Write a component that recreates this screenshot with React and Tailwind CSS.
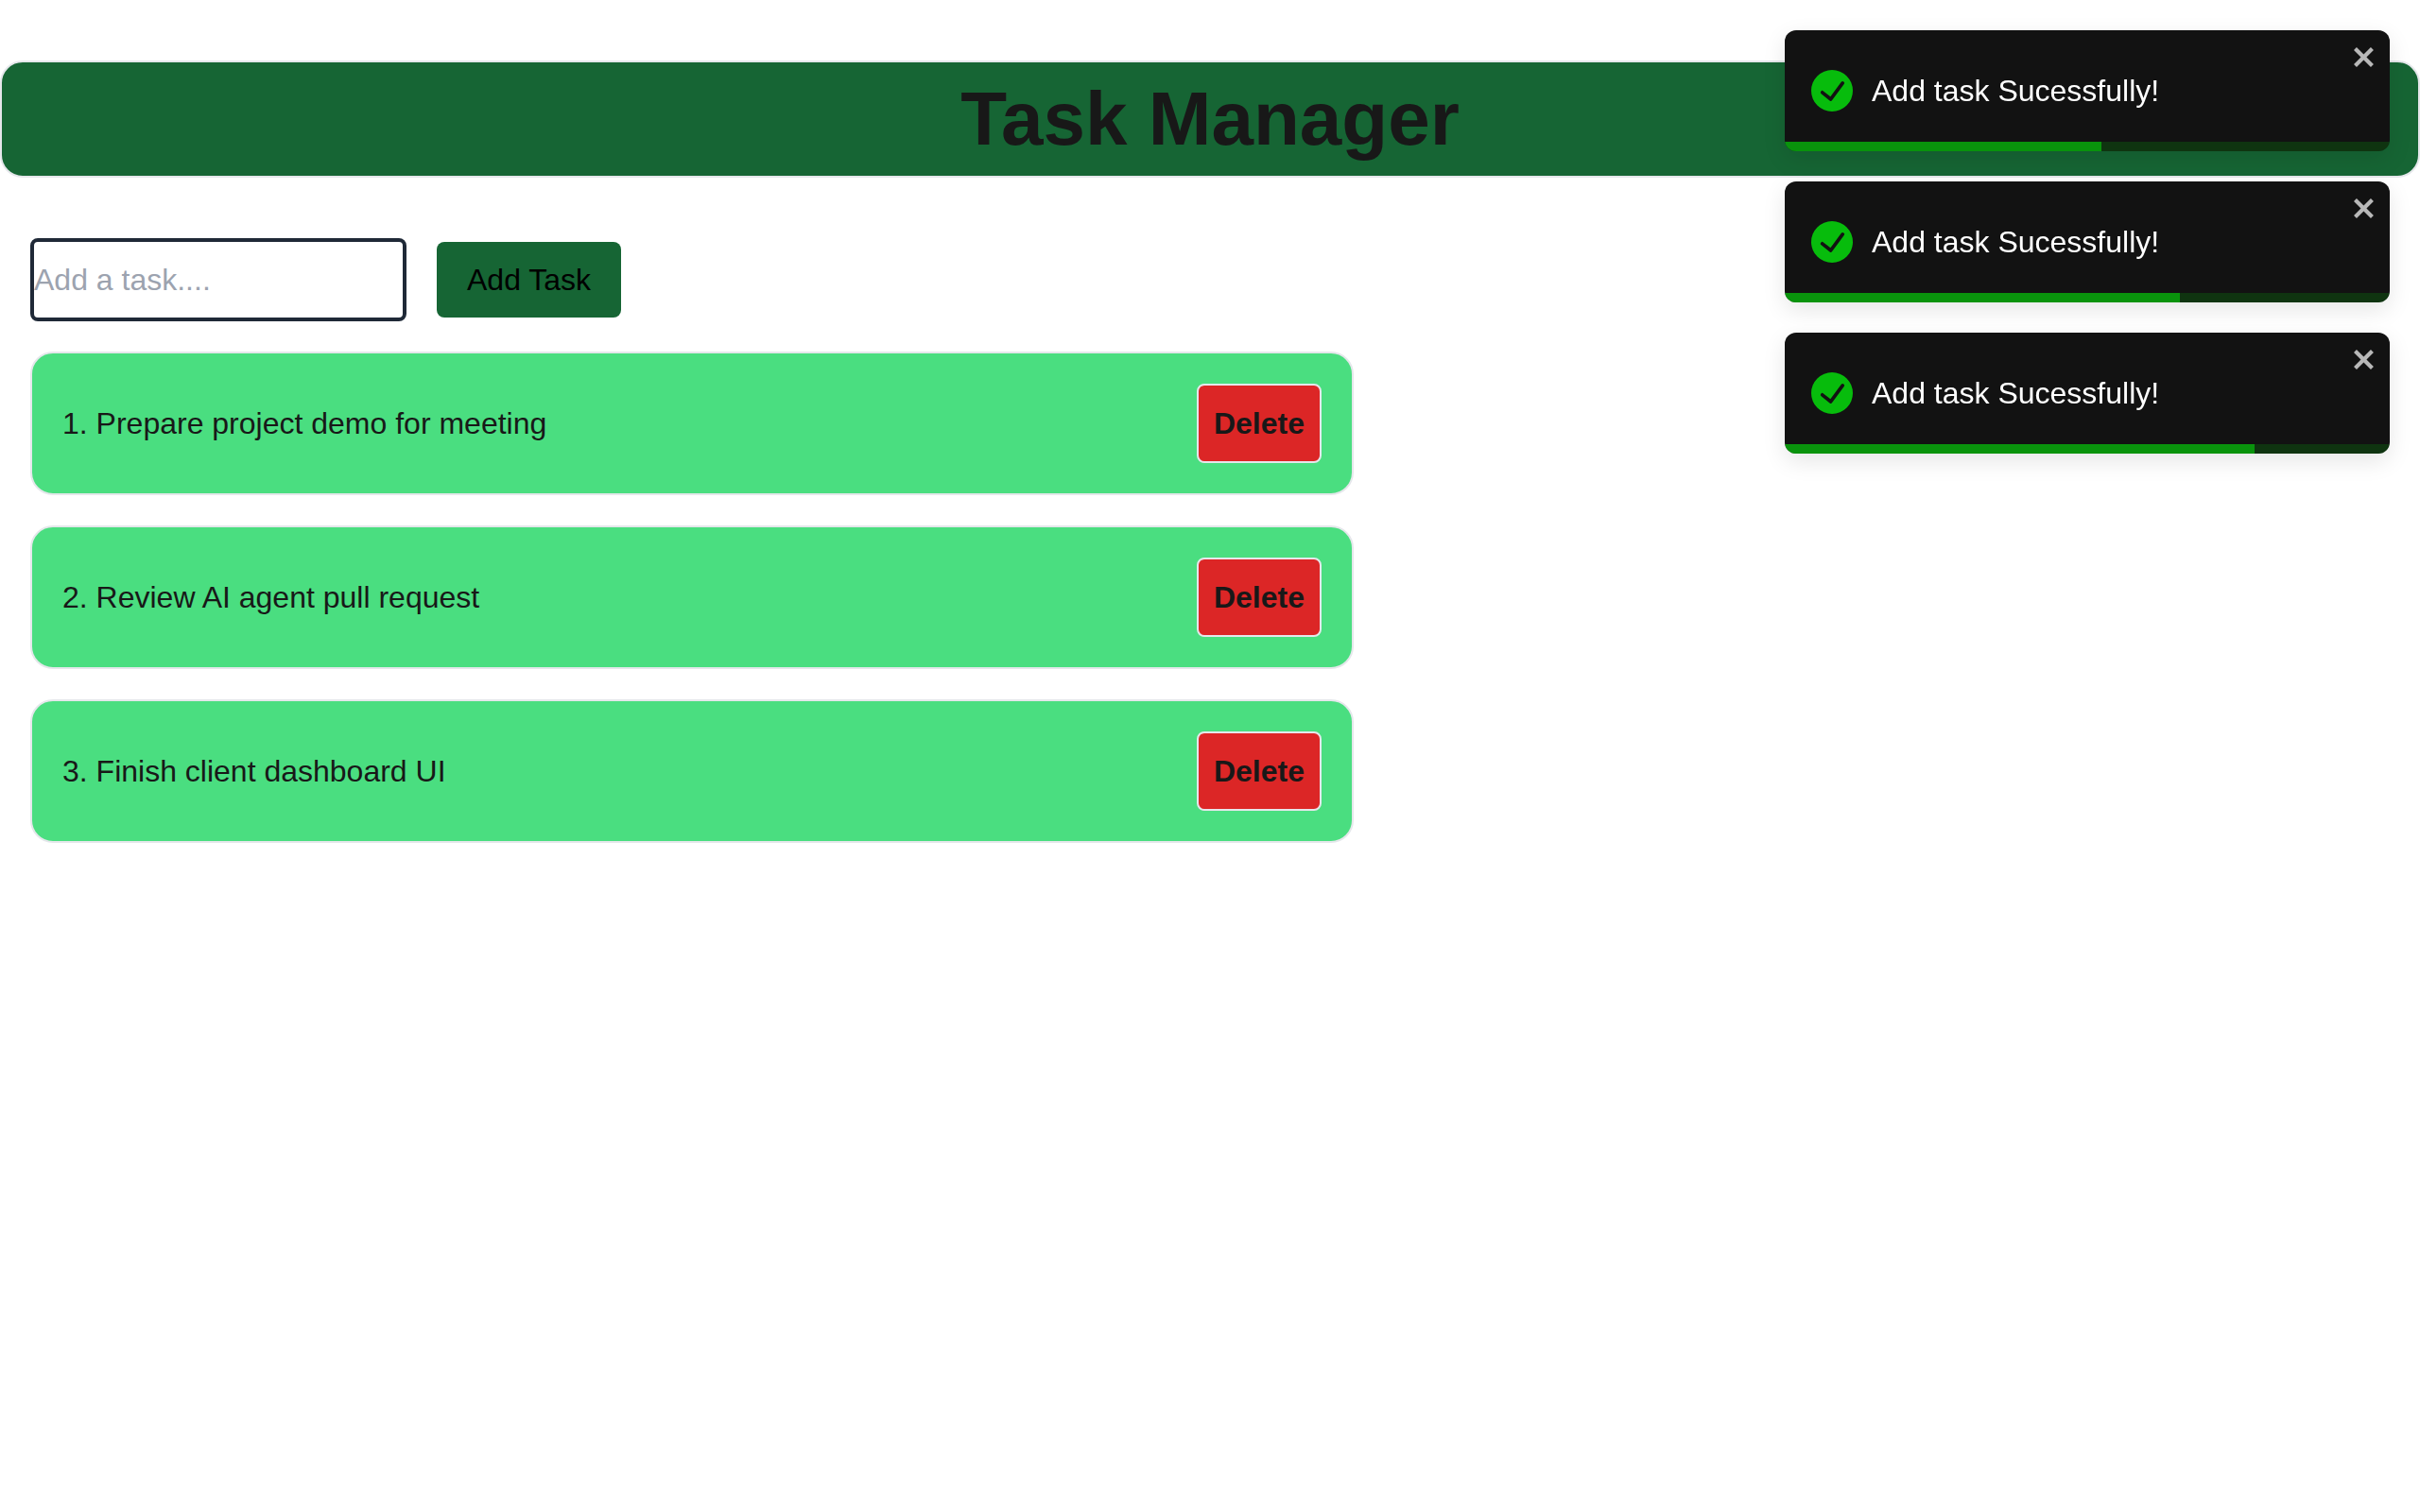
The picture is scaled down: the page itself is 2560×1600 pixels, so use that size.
import { useState } from 'react';
import clsx from 'clsx';

const INITIAL_TASKS = [
  { id: 1, title: 'Prepare project demo for meeting' },
  { id: 2, title: 'Review AI agent pull request' },
  { id: 3, title: 'Finish client dashboard UI' },
];

const INITIAL_TOASTS = [
  { id: 1, message: 'Add task Sucessfully!', progress: 335 / 640 },
  { id: 2, message: 'Add task Sucessfully!', progress: 418 / 640 },
  { id: 3, message: 'Add task Sucessfully!', progress: 497 / 640 },
];

function SuccessIcon({ className }) {
  return (
    <svg viewBox="0 0 24 24" fill="currentColor" aria-hidden="true" className={className}>
      <path d="M12 0a12 12 0 1012 12A12.014 12.014 0 0012 0zm6.927 8.2l-6.845 9.289a1.011 1.011 0 01-1.43.188l-4.888-3.908a1 1 0 111.25-1.562l4.076 3.261 6.227-8.451a1 1 0 111.61 1.183z" />
    </svg>
  );
}

function CloseIcon({ className }) {
  return (
    <svg viewBox="0 0 14 16" fill="currentColor" aria-hidden="true" className={className}>
      <path
        fillRule="evenodd"
        d="M7.71 8.23l3.75 3.75-1.48 1.48-3.75-3.75-3.75 3.75L1 11.98l3.75-3.75L1 4.48 2.48 3l3.75 3.75L9.98 3l1.48 1.48-3.75 3.75z"
      />
    </svg>
  );
}

function Toast({ toast, onClose }) {
  return (
    <div
      role="alert"
      className="relative flex min-h-32 items-center gap-5 overflow-hidden rounded-xl bg-[#121212] p-7 text-white shadow-[0_8px_24px_rgba(0,0,0,0.1)]"
    >
      <SuccessIcon className="size-11 shrink-0 text-[#07bc0c]" />
      <p>{toast.message}</p>
      <button
        type="button"
        aria-label="Close"
        onClick={() => onClose(toast.id)}
        className="absolute top-3 right-3 opacity-70 hover:opacity-100"
      >
        <CloseIcon className="h-8 w-7" />
      </button>
      <div className="absolute inset-x-0 bottom-0 h-[10px] bg-[#07bc0c]/20">
        <div className="h-full bg-[#07bc0c]/70" style={{ width: `${toast.progress * 100}%` }} />
      </div>
    </div>
  );
}

function TaskItem({ task, index, onDelete }) {
  return (
    <li className="flex items-center justify-between rounded-3xl border-2 border-[#e5e7eb] bg-[#4ade80] p-8">
      <span>
        {index + 1}. {task.title}
      </span>
      <button
        type="button"
        onClick={() => onDelete(task.id)}
        className="rounded-lg border-2 border-[#e5e7eb] bg-[#dc2626] p-4 font-bold"
      >
        Delete
      </button>
    </li>
  );
}

export default function App() {
  const [tasks, setTasks] = useState(INITIAL_TASKS);
  const [toasts, setToasts] = useState(INITIAL_TOASTS);
  const [title, setTitle] = useState('');

  const handleSubmit = (e) => {
    e.preventDefault();
    if (!title.trim()) return;
    setTasks([...tasks, { id: Date.now(), title }]);
    setToasts([...toasts, { id: Date.now(), message: 'Add task Sucessfully!', progress: 1 }]);
    setTitle('');
  };

  return (
    <div className="min-h-screen bg-white pt-16 font-['Liberation_Sans',Arial,sans-serif] text-[32px] leading-[48px] text-[#181818]">
      <header className="rounded-3xl border-2 border-[#e5e7eb] bg-[#166534] py-5">
        <h1 className="text-center text-[80px] leading-[80px] font-bold">Task Manager</h1>
      </header>

      <main className="px-8 pt-16">
        <form onSubmit={handleSubmit} className="flex items-center gap-8">
          <input
            type="text"
            aria-label="Task"
            placeholder="Add a task...."
            value={title}
            onChange={(e) => setTitle(e.target.value)}
            className="h-[88px] w-[398px] rounded-lg border-4 border-[#1f2937] outline-none placeholder:text-[#9ca3af]"
          />
          <button type="submit" className="rounded-lg bg-[#166534] px-8 py-4 text-black">
            Add Task
          </button>
        </form>

        <ul className="mt-8 flex w-full max-w-[1400px] flex-col gap-8">
          {tasks.map((task, index) => (
            <TaskItem
              key={task.id}
              task={task}
              index={index}
              onDelete={(id) => setTasks(tasks.filter((t) => t.id !== id))}
            />
          ))}
        </ul>
      </main>

      <section
        aria-label="Notifications"
        className={clsx('fixed top-8 right-8 flex w-[640px] flex-col gap-8', !toasts.length && 'hidden')}
      >
        {toasts.map((toast) => (
          <Toast
            key={toast.id}
            toast={toast}
            onClose={(id) => setToasts(toasts.filter((t) => t.id !== id))}
          />
        ))}
      </section>
    </div>
  );
}
